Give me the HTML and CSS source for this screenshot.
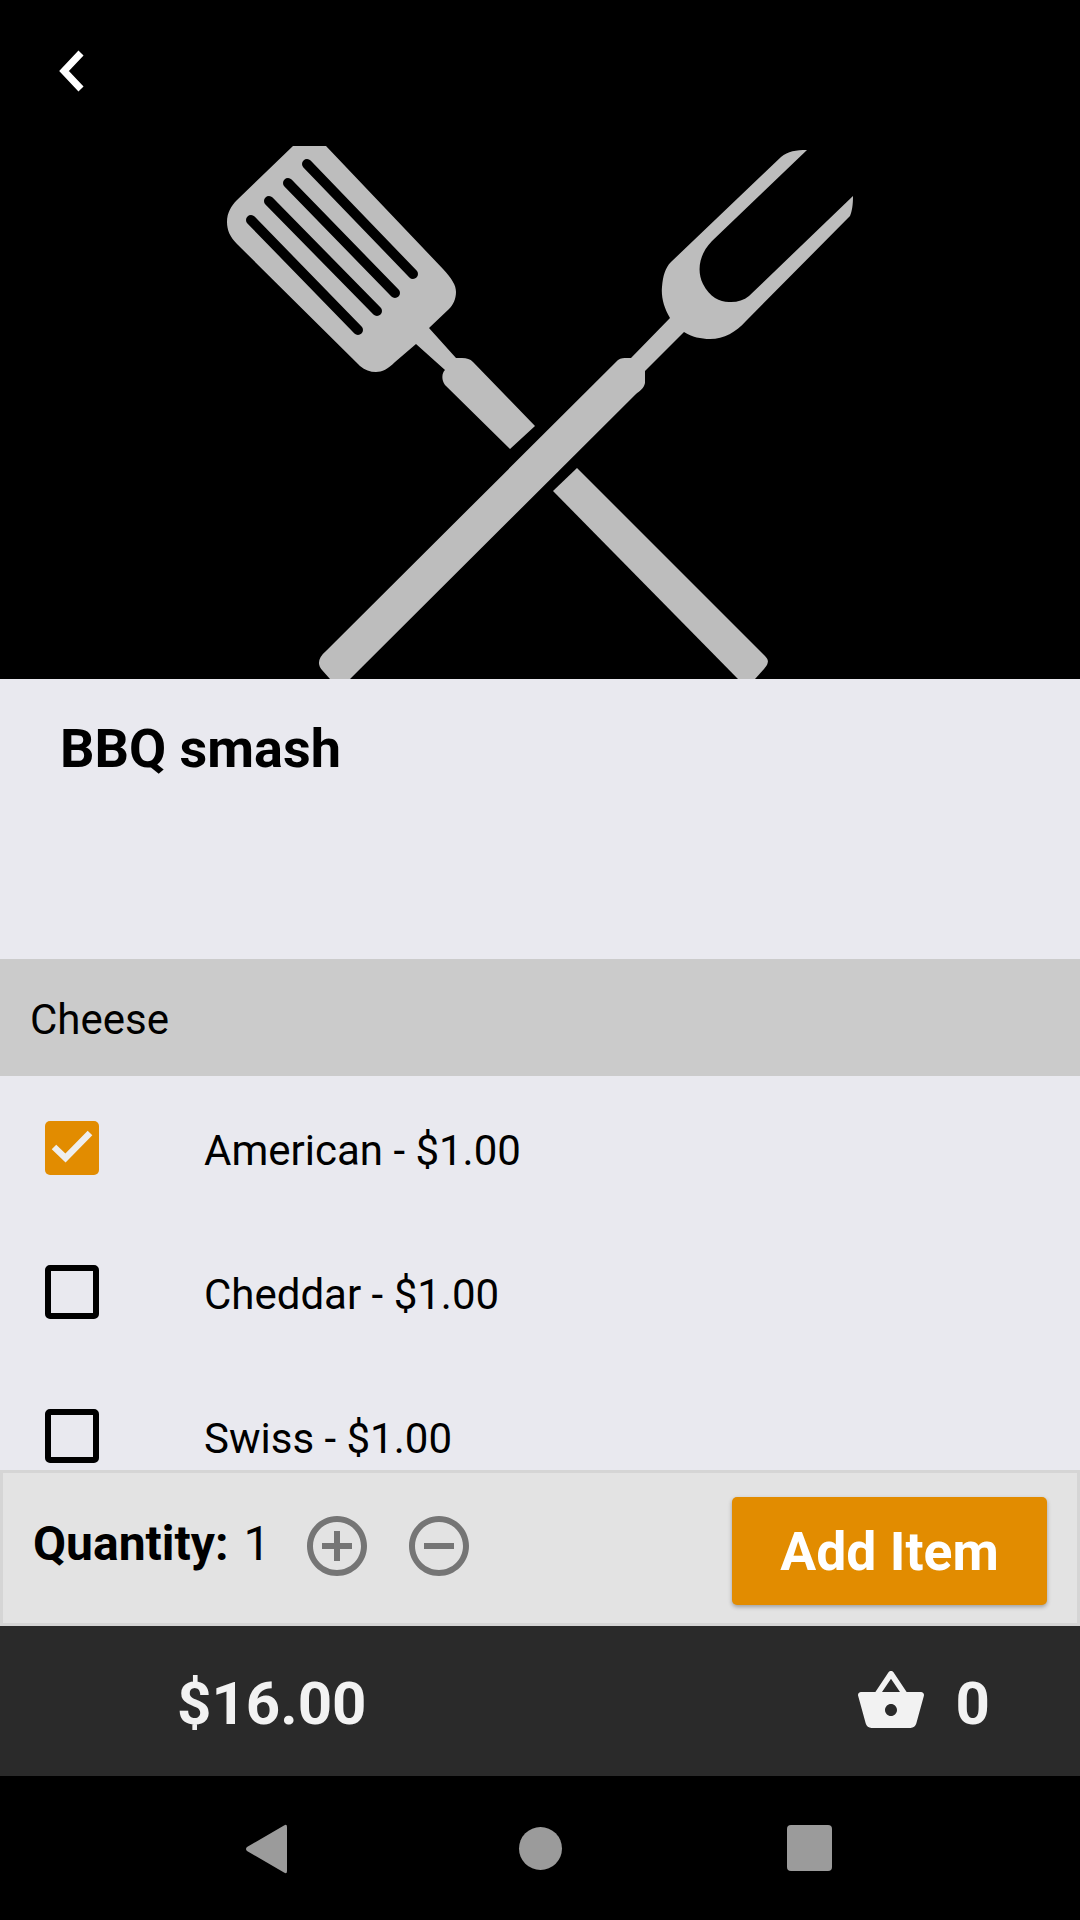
FILE: index.html
```html
<!DOCTYPE html>
<html>
<head>
    <title>BBQ smash</title>
    <link rel="stylesheet" href="styles.css">
</head>
<body>
    <div class="screen">
        <div class="hero">
            <svg class="hero-art" viewBox="0 0 1080 679">
                <!-- spatula -->
                <path class="utensil" d="M293 146 L326 146 L443 269 C452 279 456 285 456 292 C456 299 453 305 449 309 L429 328 L456 358 L462 358 C467 358 470 359 473 362 L535 426 L510 449 L445 385 C441 379 442 373 445 370 L416 344 L395 362 C388 369 382 372 376 372 C370 372 365 370 360 366 L237 244 C230 237 227 230 227 222 C227 213 231 206 237 200 Z"/>
                <line class="slot" x1="307" y1="164" x2="413" y2="274"/>
                <line class="slot" x1="288" y1="183" x2="395" y2="293"/>
                <line class="slot" x1="269" y1="201" x2="377" y2="311"/>
                <line class="slot" x1="251" y1="220" x2="358" y2="330"/>
                <path class="utensil" d="M577 468 L553 491 L738 679 L755 679 L764 669 C769 663 769 660 765 656 Z"/>
                <!-- fork -->
                <path class="utensil" d="M330 679 L322 670 C317 664 318 658 326 651 L618 360 C621 358 624 358 627 358 L631 358 L670 318 C664 308 661 297 662 287 C663 276 665 268 671 262 L781 157 C788 151 796 150 807 150 L712 241 C700 253 696 270 703 284 C710 298 722 303 731 302 C738 302 744 300 749 296 L853 196 C853 205 852 211 850 216 L746 321 C736 332 724 339 710 339 C701 339 692 337 684 332 L645 371 L645 383 C644 388 640 391 636 394 L350 679 Z"/>
            </svg>
            <svg class="back" viewBox="0 0 48 48"><path d="M31 5 L14 23 L31 41"/></svg>
        </div>
        <div class="content">
            <div class="title-area">
                <h1>BBQ smash</h1>
            </div>
            <div class="group-head">Cheese</div>
            <div class="option">
                <span class="check checked">
                    <svg viewBox="0 0 54 54"><path d="M9 26 L20.500 37 L45 12"/></svg>
                </span>
                <span class="option-label">American - $1.00</span>
            </div>
            <div class="option">
                <span class="check"></span>
                <span class="option-label">Cheddar - $1.00</span>
            </div>
            <div class="option">
                <span class="check"></span>
                <span class="option-label">Swiss - $1.00</span>
            </div>
        </div>
        <div class="order-bar">
            <span class="qty-label">Quantity:</span>
            <span class="qty-value">1</span>
            <svg class="qty-btn" viewBox="0 0 24 24"><path d="M13 7h-2v4H7v2h4v4h2v-4h4v-2h-4V7zm-1-5C6.48 2 2 6.48 2 12s4.48 10 10 10 10-4.48 10-10S17.52 2 12 2zm0 18c-4.41 0-8-3.59-8-8s3.59-8 8-8 8 3.59 8 8-3.59 8-8 8z"/></svg>
            <svg class="qty-btn" viewBox="0 0 24 24"><path d="M7 11v2h10v-2H7zm5-9C6.48 2 2 6.48 2 12s4.48 10 10 10 10-4.48 10-10S17.52 2 12 2zm0 18c-4.41 0-8-3.59-8-8s3.59-8 8-8 8 3.59 8 8-3.59 8-8 8z"/></svg>
            <button class="add-btn" type="button">Add Item</button>
        </div>
        <div class="total-bar">
            <span class="total">$16.00</span>
            <div class="cart">
                <svg class="basket" viewBox="0 0 24 24"><path d="M17.21 9l-4.38-6.56c-.19-.28-.51-.42-.83-.42-.32 0-.64.14-.83.43L6.79 9H2c-.55 0-1 .45-1 1 0 .09.01.18.04.27l2.54 9.27c.23.84 1 1.46 1.92 1.46h13c.92 0 1.69-.62 1.93-1.46l2.54-9.27L23 10c0-.55-.45-1-1-1h-4.79zM9 9l3-4.4L15 9H9zm3 8c-1.1 0-2-.9-2-2s.9-2 2-2 2 .9 2 2-.9 2-2 2z"/></svg>
                <span class="cart-count">0</span>
            </div>
        </div>
        <div class="nav-bar">
            <svg class="nav-back" viewBox="0 0 44 50"><path d="M39 1.500 Q42 -0.500 42 3 L42 47 Q42 50.500 39 48.500 L2 27 Q0 25 2 23 Z"/></svg>
            <span class="nav-home"></span>
            <span class="nav-recent"></span>
        </div>
    </div>
</body>
</html>
```

FILE: styles.css
```css
* {
    box-sizing: border-box;
}
body {
    margin: 0;
    font-family: Roboto, sans-serif;
    color: #000;
}
.screen {
    width: 1080px;
    height: 1920px;
    display: flex;
    flex-direction: column;
    background-color: #e9e9ef;
    overflow: hidden;
}
.hero {
    position: relative;
    height: 679px;
    flex: none;
    background-color: #000;
}
.hero-art {
    display: block;
    width: 1080px;
    height: 679px;
    filter: blur(0.5px);
}
.utensil {
    fill: #bdbdbd;
}
.slot {
    stroke: #000;
    stroke-width: 10;
    stroke-linecap: round;
}
.back {
    position: absolute;
    left: 50px;
    top: 48px;
    width: 48px;
    height: 48px;
    fill: none;
    stroke: #fff;
    stroke-width: 7;
}
.content {
    flex: 1;
    min-height: 0;
    overflow: hidden;
}
.title-area {
    height: 280px;
    padding: 38px 0 0 60px;
}
h1 {
    margin: 0;
    font-size: 54px;
    line-height: 64px;
    font-weight: 700;
}
.group-head {
    height: 117px;
    padding: 4px 0 0 30px;
    display: flex;
    align-items: center;
    background-color: #cbcbcb;
    font-size: 42px;
}
.option {
    height: 144px;
    padding-left: 45px;
    display: flex;
    align-items: center;
}
.check {
    width: 54px;
    height: 54px;
    flex: none;
    border: 6px solid #000;
    border-radius: 5px;
}
.check.checked {
    border: none;
    background-color: #e28c00;
}
.check svg {
    display: block;
    width: 54px;
    height: 54px;
    fill: none;
    stroke: #eeeeee;
    stroke-width: 6.500;
}
.option-label {
    margin: 4px 0 0 105px;
    font-size: 42px;
}
.order-bar {
    height: 156px;
    flex: none;
    padding: 0 30px;
    display: flex;
    align-items: center;
    background-color: #e3e3e3;
    border: 3px solid #d5d5d5;
}
.qty-label {
    margin-bottom: 10px;
    font-size: 48px;
    font-weight: 700;
}
.qty-value {
    margin: 0 0 10px 15px;
    font-size: 48px;
}
.qty-btn {
    width: 72px;
    height: 72px;
    margin-bottom: 4px;
    fill: #757575;
}
.qty-value + .qty-btn {
    margin-left: 31px;
}
.qty-btn + .qty-btn {
    margin-left: 30px;
}
.add-btn {
    width: 315px;
    height: 108px;
    margin: 6px 0 0 auto;
    padding: 0;
    border: none;
    border-radius: 5px;
    background-color: #e28c00;
    color: #fff;
    font-family: Roboto, sans-serif;
    font-size: 53.500px;
    font-weight: 700;
    box-shadow: 0 2px 4px rgba(0, 0, 0, 0.3);
}
.total-bar {
    height: 150px;
    flex: none;
    padding: 0 90px 0 177px;
    display: flex;
    align-items: center;
    justify-content: space-between;
    background-color: #2a2a2a;
    color: #f2f2f2;
    font-size: 60px;
    font-weight: 700;
}
.total,
.cart-count {
    margin-top: 4px;
}
.cart {
    display: flex;
    align-items: center;
}
.basket {
    width: 72px;
    height: 72px;
    margin-right: 29px;
    fill: #f2f2f2;
}
.nav-bar {
    position: relative;
    height: 144px;
    flex: none;
    background-color: #000;
    display: flex;
    align-items: center;
    justify-content: center;
}
.nav-back {
    position: absolute;
    left: 245px;
    top: 48px;
    width: 44px;
    height: 50px;
    fill: #9b9b9b;
}
.nav-home {
    width: 43px;
    height: 43px;
    border-radius: 50%;
    background-color: #9b9b9b;
}
.nav-recent {
    position: absolute;
    left: 787px;
    top: 49px;
    width: 45px;
    height: 46px;
    border-radius: 4px;
    background-color: #9b9b9b;
}
```
